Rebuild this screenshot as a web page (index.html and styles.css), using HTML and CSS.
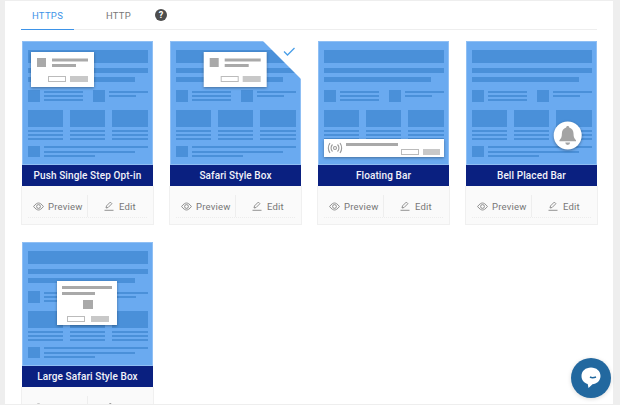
FILE: index.html
```html
<!DOCTYPE html>
<html lang="en">
<head>
    <meta charset="UTF-8">
    <title>Opt-in Templates</title>
    <link rel="stylesheet" href="styles.css">
</head>
<body>
    <svg class="defs" width="0" height="0">
        <defs>
            <g id="page-top">
                <rect x="6" y="9" width="120" height="13"/>
                <rect x="6" y="27" width="120" height="5"/>
                <rect x="6" y="36" width="107" height="5"/>
                <rect x="6" y="49" width="12" height="12"/>
                <rect x="22" y="50" width="39" height="2"/>
                <rect x="22" y="54" width="39" height="2"/>
                <rect x="22" y="58" width="39" height="2"/>
                <rect x="71" y="49" width="12" height="12"/>
                <rect x="87" y="50" width="39" height="2"/>
                <rect x="87" y="54" width="27" height="2"/>
                <rect x="6" y="69" width="35" height="17"/>
                <rect x="48" y="69" width="35" height="17"/>
                <rect x="90" y="69" width="36" height="17"/>
                <rect x="6" y="89" width="35" height="2"/>
                <rect x="6" y="93" width="35" height="2"/>
                <rect x="6" y="97" width="35" height="2"/>
                <rect x="48" y="89" width="35" height="2"/>
                <rect x="48" y="93" width="35" height="2"/>
                <rect x="48" y="97" width="35" height="2"/>
                <rect x="90" y="89" width="36" height="2"/>
                <rect x="90" y="93" width="36" height="2"/>
                <rect x="90" y="97" width="36" height="2"/>
            </g>
            <g id="page-foot">
                <rect x="6" y="105" width="12" height="11"/>
                <rect x="22" y="105" width="104" height="2"/>
                <rect x="22" y="110" width="91" height="2"/>
                <rect x="22" y="114" width="51" height="2"/>
            </g>
            <g id="small-box">
                <rect class="box" x="0" y="0" width="63" height="35"/>
                <rect class="grey" x="6" y="6" width="9" height="9"/>
                <rect class="grey" x="21" y="6.5" width="36" height="3"/>
                <rect class="grey" x="21" y="12" width="24" height="3"/>
                <rect class="btn-line" x="17.5" y="24.5" width="17" height="5"/>
                <rect class="btn-fill" x="39" y="24" width="18" height="6"/>
            </g>
            <g id="eye-icon">
                <path d="M.6 4.500C2.500 1.900 4.300 1 5.500 1s3 .9 4.900 3.500C8.500 7.100 6.700 8 5.500 8S2.500 7.100.6 4.500z"/>
                <circle cx="5.500" cy="4.500" r="1.900"/>
            </g>
            <g id="pen-icon">
                <path d="M2 7l.5-2.100L6.300 1.100l1.600 1.600L4.100 6.500z"/>
                <path d="M.5 9.300h9"/>
            </g>
        </defs>
    </svg>

    <div class="panel">
        <div class="tabs">
            <a class="tab active">HTTPS</a>
            <a class="tab">HTTP</a>
            <span class="help">?</span>
        </div>

        <div class="card-grid">
            <div class="card">
                <svg class="thumb" viewBox="0 0 131 124">
                    <g class="page"><use href="#page-top"/><use href="#page-foot"/></g>
                    <use href="#small-box" x="9" y="11"/>
                </svg>
                <div class="card-name">Push Single Step Opt-in</div>
                <div class="card-foot">
                    <div class="card-actions">
                        <a class="action preview"><svg width="11" height="9" viewBox="0 0 11 9"><use href="#eye-icon"/></svg>Preview</a>
                        <a class="action edit"><svg width="10" height="10" viewBox="0 0 10 10"><use href="#pen-icon"/></svg>Edit</a>
                    </div>
                </div>
            </div>

            <div class="card">
                <svg class="thumb" viewBox="0 0 131 124">
                    <g class="page"><use href="#page-top"/><use href="#page-foot"/></g>
                    <use href="#small-box" x="33.700" y="11"/>
                    <path class="corner" d="M93 0H131V38z"/>
                    <path class="tick" d="M114 10.500l3.500 3.500 7-7"/>
                </svg>
                <div class="card-name">Safari Style Box</div>
                <div class="card-foot">
                    <div class="card-actions">
                        <a class="action preview"><svg width="11" height="9" viewBox="0 0 11 9"><use href="#eye-icon"/></svg>Preview</a>
                        <a class="action edit"><svg width="10" height="10" viewBox="0 0 10 10"><use href="#pen-icon"/></svg>Edit</a>
                    </div>
                </div>
            </div>

            <div class="card">
                <svg class="thumb" viewBox="0 0 131 124">
                    <g class="page"><use href="#page-top"/></g>
                    <rect class="box" x="6" y="98" width="120" height="18"/>
                    <g class="signal">
                        <circle cx="17" cy="107" r="1.500"/>
                        <path d="M14.500 103.500a5 5 0 0 0 0 7M19.500 103.500a5 5 0 0 1 0 7M12 102a9 9 0 0 0 0 10M22 102a9 9 0 0 1 0 10"/>
                    </g>
                    <rect class="grey" x="28" y="102" width="52" height="3"/>
                    <rect class="btn-line" x="83.500" y="108.500" width="17" height="5"/>
                    <rect class="btn-fill" x="105" y="108" width="17" height="6"/>
                </svg>
                <div class="card-name">Floating Bar</div>
                <div class="card-foot">
                    <div class="card-actions">
                        <a class="action preview"><svg width="11" height="9" viewBox="0 0 11 9"><use href="#eye-icon"/></svg>Preview</a>
                        <a class="action edit"><svg width="10" height="10" viewBox="0 0 10 10"><use href="#pen-icon"/></svg>Edit</a>
                    </div>
                </div>
            </div>

            <div class="card">
                <svg class="thumb" viewBox="0 0 131 124">
                    <g class="page"><use href="#page-top"/><use href="#page-foot"/></g>
                    <circle class="box" cx="101.700" cy="94.500" r="14"/>
                    <path class="bell" d="M101.700 85c.9 0 1.500.6 1.500 1.400 2.900.8 4.300 3.200 4.300 6.100 0 3.800 1 5.300 2.500 6.700v1.100h-16.600v-1.100c1.500-1.400 2.500-2.900 2.500-6.700 0-2.900 1.400-5.300 4.300-6.100 0-.8.600-1.400 1.500-1.400zM99.300 101.500h4.800a2.400 2.400 0 0 1-4.800 0z"/>
                </svg>
                <div class="card-name">Bell Placed Bar</div>
                <div class="card-foot">
                    <div class="card-actions">
                        <a class="action preview"><svg width="11" height="9" viewBox="0 0 11 9"><use href="#eye-icon"/></svg>Preview</a>
                        <a class="action edit"><svg width="10" height="10" viewBox="0 0 10 10"><use href="#pen-icon"/></svg>Edit</a>
                    </div>
                </div>
            </div>

            <div class="card">
                <svg class="thumb" viewBox="0 0 131 124">
                    <g class="page"><use href="#page-top"/><use href="#page-foot"/></g>
                    <rect class="box" x="35" y="39" width="60" height="44"/>
                    <rect class="grey" x="40" y="44" width="50" height="3"/>
                    <rect class="grey" x="40" y="50" width="33" height="3"/>
                    <rect class="grey" x="61" y="58" width="10" height="9"/>
                    <rect class="btn-line" x="45.500" y="74.500" width="17" height="5"/>
                    <rect class="btn-fill" x="69" y="74" width="18" height="6"/>
                </svg>
                <div class="card-name">Large Safari Style Box</div>
                <div class="card-foot">
                    <div class="card-actions">
                        <a class="action preview"><svg width="11" height="9" viewBox="0 0 11 9"><use href="#eye-icon"/></svg>Preview</a>
                        <a class="action edit"><svg width="10" height="10" viewBox="0 0 10 10"><use href="#pen-icon"/></svg>Edit</a>
                    </div>
                </div>
            </div>
        </div>
    </div>

    <div class="chat-button">
        <svg width="24" height="26" viewBox="0 0 24 26">
            <path class="chat-bubble" d="M12 2.500c5.400 0 9.500 3.500 9.500 8.500s-4 8-8 8.300L9.500 23l-.8-4C4.800 17.900 2.500 15 2.500 11c0-5 4.100-8.500 9.500-8.500z"/>
            <path class="chat-smile" d="M11 12c1.500.9 3.500.9 6 0"/>
        </svg>
    </div>
</body>
</html>
```

FILE: styles.css
```css
html, body {
    margin: 0;
    height: 100%;
    overflow: hidden;
}
body {
    background-color: #eee;
    font-family: Roboto, Arial, sans-serif;
    color: #777;
}
.defs {
    display: block;
    height: 0;
}
.panel {
    margin: 1px 7px 0 5px;
    height: 403px;
    background-color: #fff;
    overflow: hidden;
}
.tabs {
    display: flex;
    align-items: center;
    height: 28px;
    margin: 0 16px 0 16px;
    border-bottom: 1px solid #eee;
}
.tab {
    display: block;
    width: 53px;
    height: 28px;
    line-height: 29px;
    text-align: center;
    font-size: 9.500px;
    font-weight: 400;
    letter-spacing: 0.3px;
    color: #777;
    box-sizing: border-box;
}
.tab.active {
    color: #3d93e8;
    height: 29px;
    margin-bottom: -1px;
    border-bottom: 1px solid #3d93e8;
}
.tab + .tab {
    margin-left: 18px;
}
.help {
    width: 12px;
    height: 12px;
    margin-left: 10px;
    border-radius: 50%;
    background-color: #4d4d4d;
    color: #fff;
    font-size: 9px;
    font-weight: 700;
    line-height: 12px;
    text-align: center;
}
.card-grid {
    display: grid;
    grid-template-columns: repeat(4, 131px);
    column-gap: 17px;
    row-gap: 17px;
    padding: 11px 0 0 17px;
}
.card {
    height: 184px;
}
.thumb {
    display: block;
    width: 131px;
    height: 124px;
    background-color: #6aaaf0;
    box-shadow: inset 0 0 0 1px rgba(255, 255, 255, 0.25);
}
.page {
    fill: #4a90d9;
}
.box {
    fill: #fff;
    filter: drop-shadow(0 1px 1.500px rgba(0, 0, 0, 0.35));
}
.grey {
    fill: #a9a9a9;
}
.btn-line {
    fill: #fff;
    stroke: #bbb;
    stroke-width: 1;
}
.btn-fill {
    fill: #c8c8c8;
}
.corner {
    fill: #fff;
}
.tick {
    fill: none;
    stroke: #4a9fe8;
    stroke-width: 1.300;
}
.signal {
    fill: none;
    stroke: #999;
    stroke-width: 1.100;
}
.bell {
    fill: #a3a3a3;
}
.card-name {
    height: 21px;
    line-height: 21px;
    background-color: #0a2080;
    color: #f2f2fa;
    font-size: 10px;
    font-weight: 500;
    letter-spacing: 0.1px;
    text-align: center;
    white-space: nowrap;
}
.card-foot {
    margin: 0 -1px;
    padding: 9px 6px 0;
    height: 29px;
    background-color: #fafafa;
    border: 1px solid #f0f0f0;
    border-top: none;
}
.card-actions {
    display: flex;
    align-items: center;
    height: 22px;
    border-bottom: 1px dotted #ececec;
}
.action {
    display: flex;
    align-items: center;
    height: 22px;
    font-size: 9.500px;
    letter-spacing: 0.2px;
    color: #777;
}
.action svg {
    fill: none;
    stroke: #777;
    stroke-width: 0.800;
}
.preview {
    width: 60px;
    padding-left: 5px;
    box-sizing: border-box;
    border-right: 1px solid #eee;
}
.preview svg {
    margin-right: 4px;
}
.edit {
    padding-left: 16px;
}
.edit svg {
    margin-right: 5px;
}
.chat-button {
    position: absolute;
    left: 571px;
    top: 358px;
    width: 40px;
    height: 40px;
    display: flex;
    align-items: center;
    justify-content: center;
    border-radius: 50%;
    background-color: #22689f;
    box-shadow: 0 1px 4px rgba(0, 0, 0, 0.15);
}
.chat-bubble {
    fill: #fff;
}
.chat-smile {
    fill: none;
    stroke: #22689f;
    stroke-width: 1.500;
}
```
